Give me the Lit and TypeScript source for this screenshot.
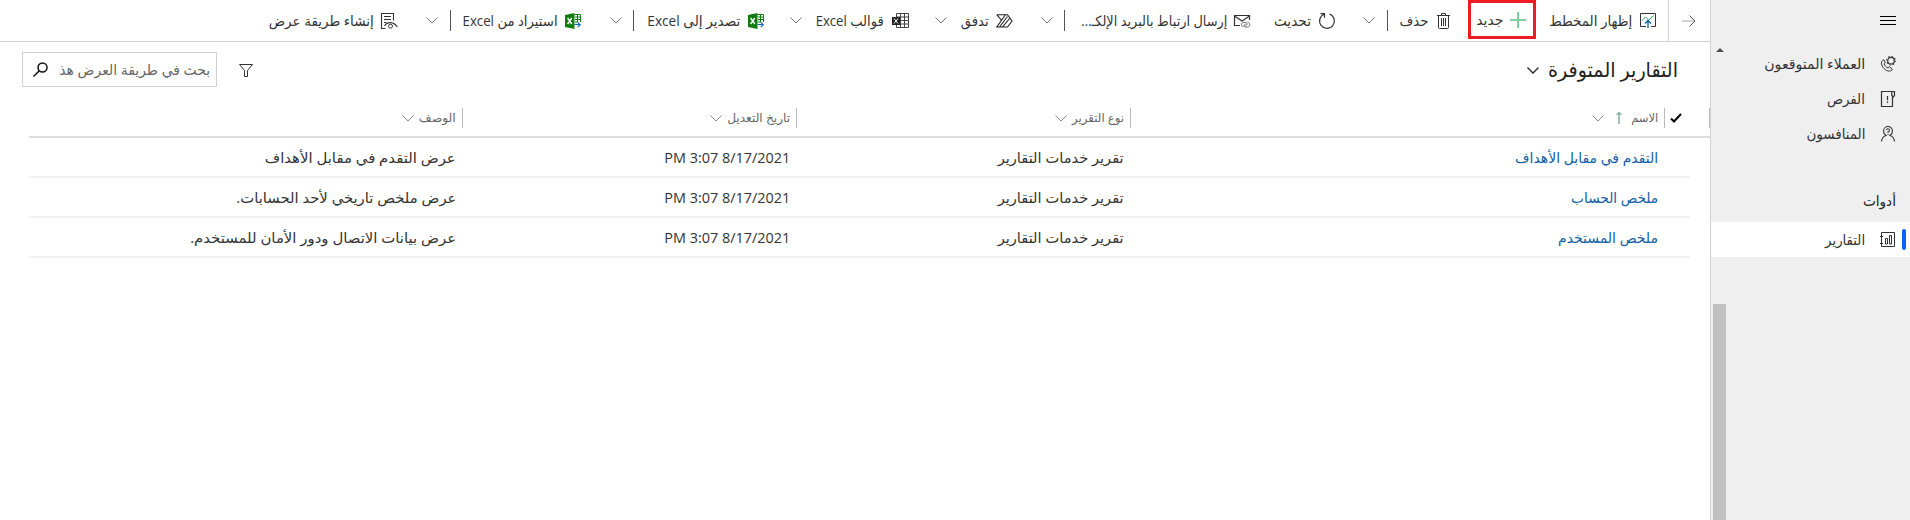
import { LitElement, html, css, svg } from "lit";
import { customElement, property } from "lit/decorators.js";

/** One line of text kept to a fixed measure. */
@customElement("fit-text")
class FitText extends LitElement {
  @property({ type: Number }) w = 0;
  @property() text = "";
  static styles = css`
    :host { display: block; flex: none; white-space: nowrap; }
    .t { display: inline-block; transform-origin: 100% 50%; }
  `;
  firstUpdated() {
    this.style.width = this.w + "px";
    const t = this.renderRoot.querySelector(".t") as HTMLElement;
    const n = t.getBoundingClientRect().width;
    if (n > 0) t.style.transform = `scaleX(${this.w / n})`;
  }
  render() {
    return html`<span class="t">${this.text}</span>`;
  }
}

const S = (w: number, h: number, body: unknown) =>
  html`<svg class="ico" width=${w} height=${h} viewBox="0 0 ${w} ${h}" fill="none" stroke="#333" stroke-width="1">${body}</svg>`;

const chevron = (c: string, sw = 1) =>
  html`<svg class="ico" width="12" height="7" viewBox="0 0 12 7" fill="none" stroke=${c} stroke-width=${sw}><path d="M.5.5 6 6 11.5.5" /></svg>`;

const excel = svg`<path d="M0 2 9.500 0V16L0 14Z" fill="#107c10" stroke="none"/><path d="M2.600 5 6.800 11M6.800 5 2.600 11" stroke="#fff" stroke-width="1.400"/><path d="M9.500 1.500H15.500V9M10 4H15M10 6.500H15M10 9H13M12.500 2V9" stroke="#107c10"/><path d="M9.500 11.500H15M12.800 9.300 15.200 11.700 12.800 14.200" stroke="#0f6cbd" stroke-width="1.200"/>`;

const icons: Record<string, unknown> = {
  chart: S(16, 15, svg`<path d="M6 13.500H.500V.500H15.500V13.500H11"/><path d="M2 7.500 5.500 4 8.500 7 14 2.500" stroke="#2aa05a"/><path d="M8 15V8M5 10.500 8 7.500 11 10.500" stroke="#0f5ea8" stroke-width="1.300"/>`),
  plus: S(16, 16, svg`<path d="M8 0V16M0 8H16" stroke="#84cf9f" stroke-width="2"/>`),
  trash: S(13, 16, svg`<path d="M0 2.500H13M4.500 2V.500H8.500V2M1.500 3V14.500Q1.500 15.500 2.500 15.500H10.500Q11.500 15.500 11.500 14.500V3M4.500 5V13M6.500 5V13M8.500 5V13"/>`),
  refresh: S(16, 16, svg`<path d="M10.500 1A7.400 7.400 0 1 1 5 1.200M1.500 .700H5.500V4.700" stroke-width="1.200"/>`),
  mail: S(16, 14, svg`<path d="M6 11.500H.500V1.500H15.500V6M.500 2 8 7 15.500 2" stroke-width="1.200"/><path d="M9.500 12.500C7 12.500 6.500 8.500 9.500 8.500H11.500C13.500 8.500 13.500 11.500 11.500 11.500M13.500 8C16.500 8.500 16.500 13 13.500 13H11.500C9.500 13 9.500 10.300 11.500 10.300" stroke="#666"/>`),
  flow: S(17, 14, svg`<path d="M.800.700H11.500L16 7 11.500 13H6.500L14 4M.800.700 5.500 6.200.800 13H3.500L11.500 2.500M5.500 6.200 9.500.700M3.500 13H6.500" stroke="#222" stroke-width="1.100"/>`),
  template: S(17, 15, svg`<path d="M4.500 4V.500H16.500V14.500H4.500V11M4.500 4H16.500M8 7.500H16.500M8 11H16.500M8.500.500V14.500M12.500.500V14.500" stroke="#444"/><rect x="0" y="4" width="8" height="8" fill="#222" stroke="none"/><path d="M2 5.500 6 10.500M6 5.500 2 10.500" stroke="#fff"/>`),
  xl: S(16, 16, excel),
  view: S(17, 16, svg`<path d="M4.500 15.500H.500V.500H12.500V7.500M3 3.500H10M3 6.500H10M3 9.500H5.500M3.500 13C6 8.300 13 8.300 16.200 14" stroke-width="1.100"/><circle cx="9.500" cy="13.200" r="2"/>`),
};

type Cmd = { icon?: string; text?: string; w?: number; gap?: number; kind?: "chev" | "div" | "box"; before: number };

/* Right to left: distance from the previous item, then the item itself. */
const commands: Cmd[] = [
  { icon: "chart", text: "إظهار المخطط", w: 83, gap: 8, before: 12 },
  { kind: "box", icon: "plus", text: "جديد", w: 27, gap: 7, before: 13 },
  { icon: "trash", text: "حذف", w: 29, gap: 8, before: 18 },
  { kind: "div", before: 12 },
  { kind: "chev", before: 12 },
  { icon: "refresh", text: "تحديث", w: 37, gap: 8, before: 28 },
  { icon: "mail", text: "إرسال ارتباط بالبريد الإلكـ...", w: 146, gap: 7, before: 24 },
  { kind: "div", before: 16 },
  { kind: "chev", before: 11 },
  { icon: "flow", text: "تدفق", w: 28, gap: 7, before: 28 },
  { kind: "chev", before: 14 },
  { icon: "template", text: "قوالب Excel", w: 68, gap: 8, before: 26 },
  { kind: "chev", before: 14 },
  { icon: "xl", text: "تصدير إلى Excel", w: 93, gap: 8, before: 26 },
  { kind: "div", before: 13 },
  { kind: "chev", before: 11 },
  { icon: "xl", text: "استيراد من Excel", w: 95, gap: 7, before: 29 },
  { kind: "div", before: 12 },
  { kind: "chev", before: 12 },
  { icon: "view", text: "إنشاء طريقة عرض", w: 105, gap: 7, before: 28 },
];

const rows = [
  ["التقدم في مقابل الأهداف", 143, "عرض التقدم في مقابل الأهداف", 191],
  ["ملخص الحساب", 87, "عرض ملخص تاريخي لأحد الحسابات.", 220],
  ["ملخص المستخدم", 100, "عرض بيانات الاتصال ودور الأمان للمستخدم.", 266],
] as [string, number, string, number][];

@customElement("app-root")
class AppRoot extends LitElement {
  static styles = css`
    :host { display: block; width: 1910px; height: 520px; direction: rtl; overflow: hidden; background: #fff; color: #333;
      font-family: "Open Sans", "DejaVu Sans", sans-serif; font-size: 14px; line-height: 20px; }
    * { box-sizing: border-box; }
    .app { display: flex; height: 520px; }
    .ico { display: block; flex: none; overflow: visible; }
    .side { width: 200px; flex: none; background: #efefef; border-left: 1px solid #d2d2d2; display: flex; }
    .nav { width: 182px; flex: none; }
    .burger { height: 46px; padding: 15px 14px 0 0; }
    .item { height: 35px; display: flex; align-items: center; padding-right: 14px; gap: 15px; }
    .item .cell { width: 16px; display: flex; justify-content: center; }
    .head { height: 45px; margin-top: 26px; padding: 14px 14px 0 0; color: #222; }
    .item.on { background: #fff; position: relative; margin-left: -17px; padding-right: 4px; }
    .bar { width: 4px; height: 21px; border-radius: 2px; background: #0b63ff; margin-left: -9px; }
    .track { width: 17px; flex: none; display: flex; flex-direction: column; align-items: center; padding-top: 48px; }
    .thumb { width: 13px; background: #c1c1c1; flex: 1; margin-top: 252px; }
    .main { width: 1710px; display: flex; flex-direction: column; }
    .cmds { height: 42px; border-bottom: 1px solid #d2d2d2; display: flex; align-items: flex-start; flex: none; }
    .back { width: 42px; height: 41px; border-left: 1px solid #d2d2d2; display: flex; align-items: center; padding-right: 14px; flex: none; }
    .cmd { display: flex; align-items: center; height: 41px; flex: none; }
    .cmd.box { height: 39px; width: 68px; border: 3px solid #ed1c24; padding-right: 7px; }
    .vd { width: 1px; height: 21px; background: #555; }
    .top { display: flex; height: 64px; padding: 10px 32px 0 22px; align-items: flex-start; }
    .title { font-size: 20px; line-height: 28px; color: #222; margin-top: 4px; display: flex; align-items: center; gap: 9px; }
    .grow { flex: 1; }
    .filter { margin: 12px 0 0 22px; }
    .search { width: 195px; height: 35px; border: 1px solid #d2d2d2; display: flex; align-items: center; justify-content: space-between; padding: 0 6px 0 10px; color: #666; }
    .grid { margin-left: 29px; }
    .cols { display: flex; height: 32px; border-bottom: 2px solid #dedede; font-size: 12px; color: #666; align-items: flex-start; }
    .col { display: flex; align-items: center; height: 20px; border-right: 1px solid #bbb; padding-right: 6px; gap: 5px; margin-top: 2px; flex: none; }
    .col.name { width: 534px; gap: 9px; }
    .name .ico + .ico { margin-right: 3px; }
    .check { width: 45px; padding-right: 27px; }
    .row { display: flex; height: 40px; border-bottom: 2px solid #f3f3f3; margin-right: 20px; align-items: center; padding: 2px 32px 0 0; }
    .c { flex: none; width: 334px; }
    .c.link { color: #115ea3; width: 534px; }
  `;

  render() {
    return html`<div class="app">
      <div class="side">
        <div class="nav">
          <div class="burger">${S(16, 11, svg`<path d="M0 1.500H16M0 5.500H16M0 9.500H16" stroke="#000"/>`)}</div>
          ${this.nav("العملاء المتوقعون", 101, svg`<path d="M2.300 4.800C-1.200 8 6 17.500 11.500 14.500L12.300 13 9.500 10.800 8 12C6 11.200 4.600 9.500 4 7.700L5.300 6.500 3.900 3.800Z"/><circle cx="11" cy="4.700" r="3.300" stroke-width="1.200"/><circle cx="11" cy="4.700" r="4.300" stroke-width="1.100" stroke-dasharray="1.500 1.877"/>`)}
          ${this.nav("الفرص", 38, svg`<path d="M12.500 5.500V15.500H1.500V.500H12.500M12.500.500H14.500V4.500L13.500 5.800 11.800 4.500V.500M7.500 5V9.300M7.500 10.500V12" stroke-width="1.200"/>`)}
          ${this.nav("المنافسون", 59, svg`<path d="M1.500 15.500Q1.800 11 6 9.500 3.500 8 3.500 5A4.500 4.500 0 0 1 12.500 5Q12.500 8 10 9.500 14.200 11 14.500 15.500M6.300 4.200Q6.800 2.700 8 2.800 9.700 3 9.600 4.400 9.400 5.300 8 6V7M8 8V9" stroke-width="1.100"/>`)}
          <div class="head"><fit-text .w=${33} .text=${"أدوات"}></fit-text></div>
          <div class="item on"><div class="bar"></div>${this.sideIcon(svg`<path d="M1.500.500H14.500V14.500H1.500ZM0 4.500H3M0 11.500H3M5.500 6.500H7.500V12H5.500ZM9.500 3.500H11.500V12H9.500Z"/>`)}<fit-text .w=${40} .text=${"التقارير"}></fit-text></div>
        </div>
        <div class="track"><svg width="8" height="4" viewBox="0 0 8 4"><path d="M0 4 4 0 8 4Z" fill="#505050"/></svg><div class="thumb"></div></div>
      </div>
      <div class="main">
        <div class="cmds">
          <div class="back">${S(14, 12, svg`<path d="M0 6H13" stroke="#aaa"/><path d="M7.500.500 13 6 7.500 11.500" stroke="#555"/>`)}</div>
          ${commands.map((c) => this.cmd(c))}
        </div>
        <div class="top">
          <div class="title"><fit-text .w=${130} .text=${"التقارير المتوفرة"}></fit-text>${chevron("#222", 1.3)}</div>
          <div class="grow"></div>
          <div class="filter">${S(14, 13, svg`<path d="M.500.500H13.500L8.500 6.500V12.500H5.500V6.500Z"/>`)}</div>
          <div class="search"><fit-text .w=${151} .text=${"بحث في طريقة العرض هذ"}></fit-text>${S(15, 15, svg`<circle cx="9.500" cy="5.500" r="4.500" stroke="#111" stroke-width="1.500"/><path d="M6.300 8.700.500 14.500" stroke="#111" stroke-width="1.500"/>`)}</div>
        </div>
        <div class="grid">
          <div class="cols">
            <div class="col check">${S(12, 10, svg`<path d="M1 5.500 4 8.500 11 1" stroke="#000" stroke-width="2"/>`)}</div>
            <div class="col name"><fit-text .w=${27} .text=${"الاسم"}></fit-text>${S(6, 12, svg`<path d="M3 12V.500M.500 3 3 .500 5.500 3" stroke="#4a8a68"/>`)}${chevron("#888")}</div>
            ${this.col("نوع التقرير", 52, 334)}${this.col("تاريخ التعديل", 63, 334)}${this.col("الوصف", 37, 433)}
          </div>
          ${rows.map(([n, nw, d, dw]) => html`<div class="row">
            <div class="c link"><fit-text .w=${nw} .text=${n}></fit-text></div>
            <div class="c"><fit-text .w=${126} .text=${"تقرير خدمات التقارير"}></fit-text></div>
            <div class="c"><fit-text .w=${126} .text=${"8/17/2021 3:07 PM"}></fit-text></div>
            <div class="c"><fit-text .w=${dw} .text=${d}></fit-text></div>
          </div>`)}
        </div>
      </div>
    </div>`;
  }
  col(t: string, w: number, full: number) {
    return html`<div class="col" style="width:${full}px"><fit-text .w=${w} .text=${t}></fit-text>${chevron("#888")}</div>`;
  }
  sideIcon(body: unknown) { return html`<div class="cell">${S(16, 16, body)}</div>`; }
  nav(t: string, w: number, body: unknown) {
    return html`<div class="item">${this.sideIcon(body)}<fit-text .w=${w} .text=${t}></fit-text></div>`;
  }
  cmd(c: Cmd) {
    const st = `margin-right:${c.before}px`;
    if (c.kind === "div") return html`<div class="cmd" style=${st}><div class="vd"></div></div>`;
    if (c.kind === "chev") return html`<div class="cmd" style=${st}>${chevron("#777")}</div>`;
    return html`<div class="cmd ${c.kind === "box" ? "box" : ""}" style="${st};gap:${c.gap}px">${icons[c.icon!]}<fit-text .w=${c.w} .text=${c.text}></fit-text></div>`;
  }
}
